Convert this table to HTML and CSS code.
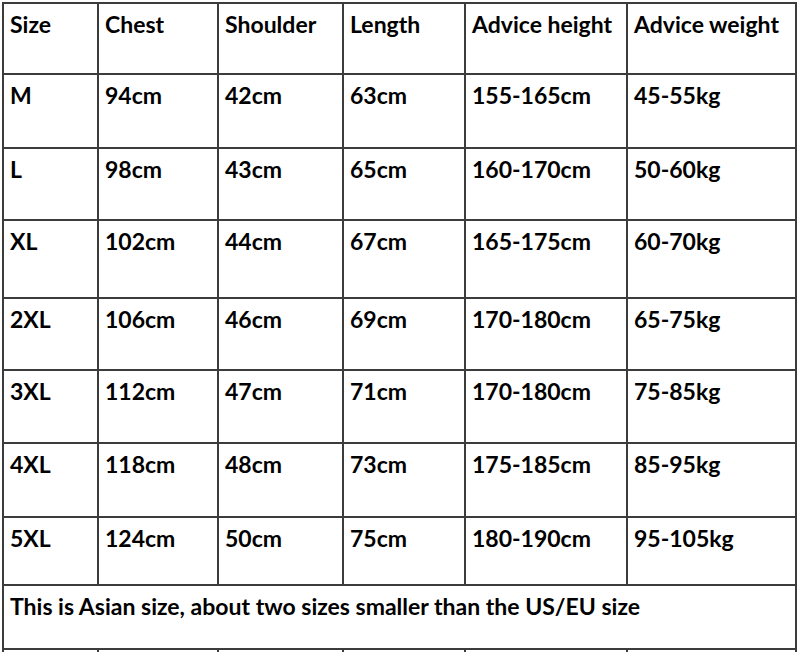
FILE: index.html
```html
<!DOCTYPE html>
<html>
<head>
<meta charset="utf-8">
<link rel="stylesheet" href="styles.css">
</head>
<body>
<div class="chart">
  <div class="cell">Size</div><div class="cell">Chest</div><div class="cell">Shoulder</div><div class="cell">Length</div><div class="cell">Advice height</div><div class="cell">Advice weight</div>
  <div class="cell">M</div><div class="cell">94cm</div><div class="cell">42cm</div><div class="cell">63cm</div><div class="cell">155-165cm</div><div class="cell">45-55kg</div>
  <div class="cell">L</div><div class="cell">98cm</div><div class="cell">43cm</div><div class="cell">65cm</div><div class="cell">160-170cm</div><div class="cell">50-60kg</div>
  <div class="cell">XL</div><div class="cell">102cm</div><div class="cell">44cm</div><div class="cell">67cm</div><div class="cell">165-175cm</div><div class="cell">60-70kg</div>
  <div class="cell">2XL</div><div class="cell">106cm</div><div class="cell">46cm</div><div class="cell">69cm</div><div class="cell">170-180cm</div><div class="cell">65-75kg</div>
  <div class="cell">3XL</div><div class="cell">112cm</div><div class="cell">47cm</div><div class="cell">71cm</div><div class="cell">170-180cm</div><div class="cell">75-85kg</div>
  <div class="cell">4XL</div><div class="cell">118cm</div><div class="cell">48cm</div><div class="cell">73cm</div><div class="cell">175-185cm</div><div class="cell">85-95kg</div>
  <div class="cell">5XL</div><div class="cell">124cm</div><div class="cell">50cm</div><div class="cell">75cm</div><div class="cell">180-190cm</div><div class="cell">95-105kg</div>
  <div class="cell note">This is Asian size, about two sizes smaller than the US/EU size</div>
  <div class="cell stub"></div><div class="cell stub"></div><div class="cell stub"></div><div class="cell stub"></div><div class="cell stub"></div><div class="cell stub"></div>
</div>
</body>
</html>
```
FILE: styles.css
```css
html, body {
  margin: 0;
  padding: 0;
  background: #ffffff;
}
body {
  overflow: hidden;
  height: 652px;
}
.chart {
  display: grid;
  grid-template-columns: 95px 120px 125px 122px 162px 169px;
  grid-template-rows: 71px 74px 72px 78px 72px 73px 74px 68px 64px 2px;
  width: 795px;
  box-sizing: border-box;
  margin: 2px 0 0 2px;
  border-left: 2px solid #3c3c3c;
  border-top: 2px solid #3c3c3c;
  font-family: "Lato", "Liberation Sans", sans-serif;
  font-weight: 700;
  font-size: 23px;
  color: #000;
}
.cell {
  box-sizing: border-box;
  border-right: 2px solid #3c3c3c;
  border-bottom: 2px solid #3c3c3c;
  padding: 6px 0 0 6px;
  line-height: 28px;
  white-space: nowrap;
  overflow: hidden;
}
.note {
  grid-column: 1 / -1;
  padding-left: 6px;
}
.stub {
  border-bottom: 0;
  padding: 0;
}
```
